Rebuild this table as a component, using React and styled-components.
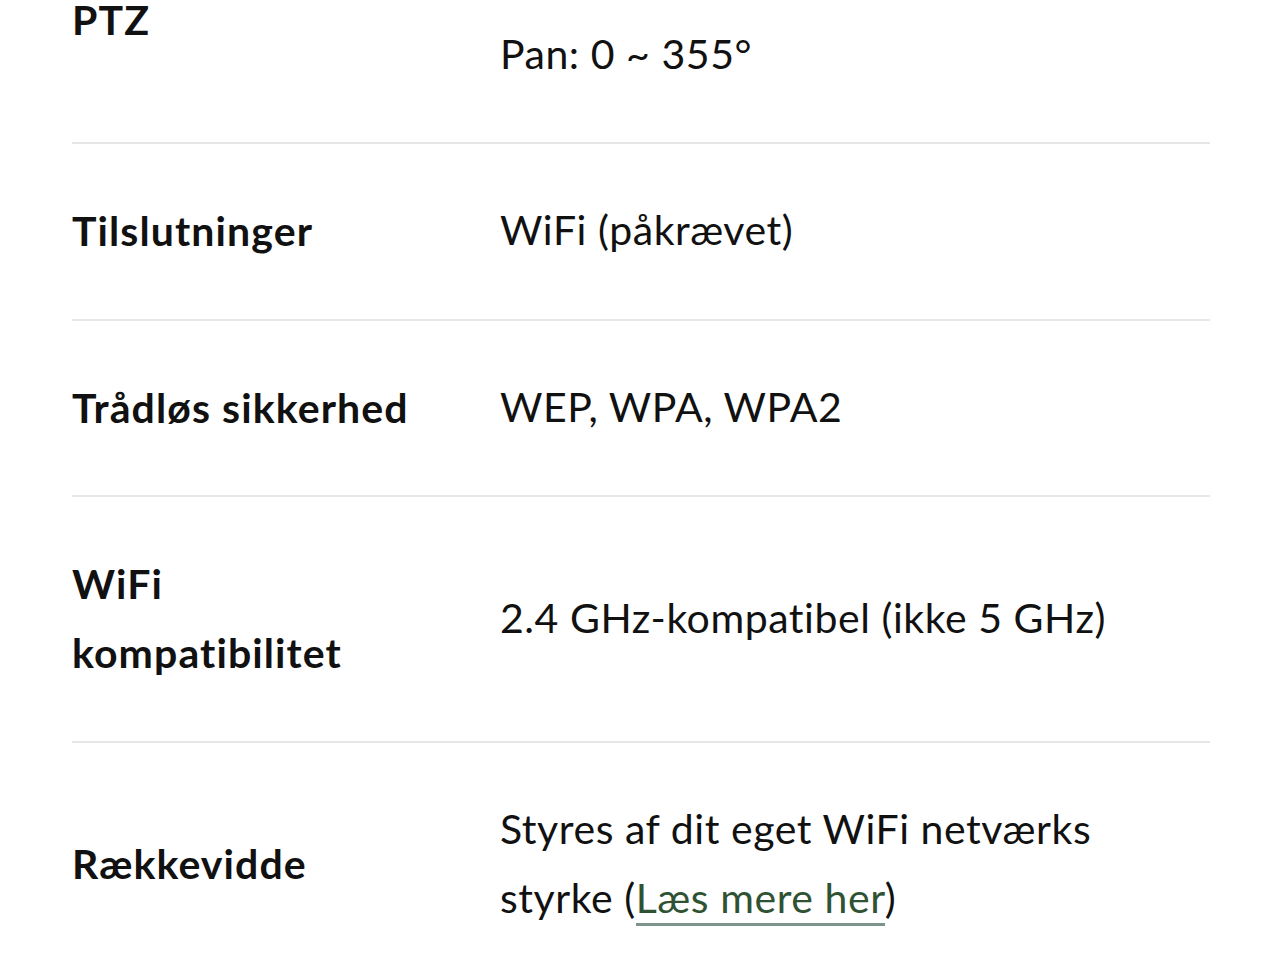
import React from 'react';
import styled, { createGlobalStyle } from 'styled-components';

const GlobalStyle = createGlobalStyle`
  body {
    margin: 0;
    background: #ffffff;
    font-family: Lato, "Open Sans", sans-serif;
    color: #111111;
    overflow: hidden;
  }
`;

const Page = styled.div`
  box-sizing: border-box;
  width: 1280px;
  height: 960px;
  overflow: hidden;
  padding: 0 70px 0 72px;
`;

const Table = styled.div`
  display: flex;
  flex-direction: column;
  margin-top: -101.5px;
`;

const Row = styled.div`
  display: grid;
  grid-template-columns: 428px 1fr;
  align-items: center;
  padding: 53px 0 52.5px;
  border-bottom: 2px solid #e6e6e6;
  font-size: 41px;
  line-height: 69px;
`;

const Label = styled.div`
  font-weight: 700;
  letter-spacing: 1.1px;
  color: #111111;
  padding-right: 20px;
  transform: translateY(-1px);
`;

const Value = styled.div`
  font-weight: 400;
  letter-spacing: 0.55px;
  color: #111111;
  transform: translateY(-2px);
`;

const Link = styled.a`
  color: #2f5233;
  text-decoration: none;
  border-bottom: 3px solid #7c948a;
  padding-bottom: 1px;
`;

const specs = [
  { label: 'PTZ', value: <>Tilt: 0 ~ 90°<br />Pan: 0 ~ 355°</> },
  { label: 'Tilslutninger', value: 'WiFi (påkrævet)' },
  { label: 'Trådløs sikkerhed', value: 'WEP, WPA, WPA2' },
  { label: <>WiFi<br />kompatibilitet</>, value: '2.4 GHz-kompatibel (ikke 5 GHz)' },
  {
    label: 'Rækkevidde',
    value: <>Styres af dit eget WiFi netværks<br />styrke (<Link href="#">Læs mere her</Link>)</>,
  },
];

export default function App() {
  return (
    <Page>
      <GlobalStyle />
      <Table>
        {specs.map((s, i) => (
          <Row key={i}>
            <Label>{s.label}</Label>
            <Value>{s.value}</Value>
          </Row>
        ))}
      </Table>
    </Page>
  );
}
